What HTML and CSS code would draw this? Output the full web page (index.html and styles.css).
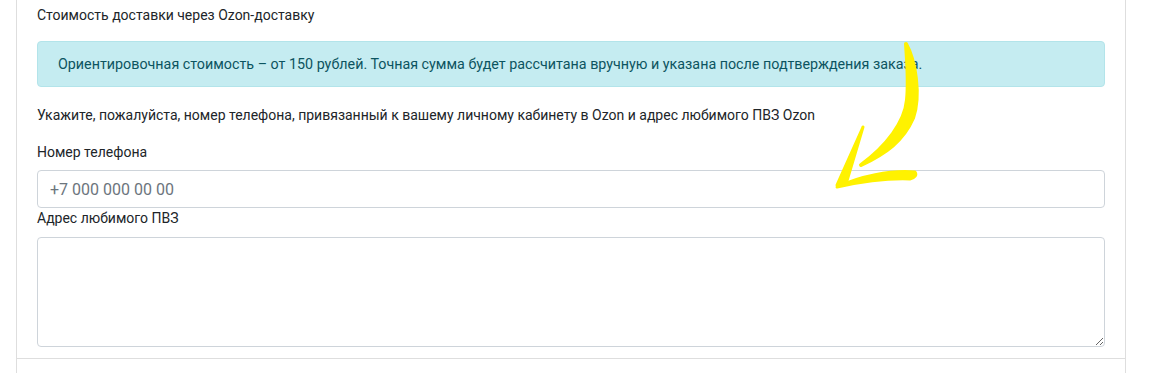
FILE: index.html
```html
<!doctype html>
<html lang="ru">
<head>
	<meta charset="utf-8" />
	<title>Доставка</title>
	<link rel="stylesheet" href="styles.css">
</head>
<body>
	<div class="page">
		<div class="card">
			<div class="card-body">
				<p class="title">Стоимость доставки через Ozon-доставку</p>
				<div class="alert">Ориентировочная стоимость – от 150 рублей. Точная сумма будет рассчитана вручную и указана после подтверждения заказа.</div>
				<p class="hint">Укажите, пожалуйста, номер телефона, привязанный к вашему личному кабинету в Ozon и адрес любимого ПВЗ Ozon</p>
				<label class="label" for="phone">Номер телефона</label>
				<input class="field" id="phone" type="text" placeholder="+7 000 000 00 00">
				<label class="label label-area" for="addr">Адрес любимого ПВЗ</label>
				<textarea class="field area" id="addr"></textarea>
			</div>
			<div class="card-footer"></div>
		</div>
	</div>

	<!-- жёлтая стрелка поверх формы -->
	<svg class="arrow" width="1151" height="373" viewBox="0 0 1151 373">
		<path d="M906,44 C915,60 921,95 913,118 C903,141 886,153 861,165 C887,146 905,122 907,100 C909,80 907,60 906,44 Z" fill="#fff200" stroke="#fff200" stroke-width="4" stroke-linejoin="round"/>
		<path d="M863,127 L837,185 L846,184 Z" fill="#fff200" stroke="#fff200" stroke-width="3" stroke-linejoin="round"/>
		<path d="M837,187 C860,176 890,170 915,172 C917,175 915,178 910,179 C885,178 860,182 837,187 Z" fill="#fff200" stroke="#fff200" stroke-width="3" stroke-linejoin="round"/>
	</svg>
</body>
</html>
```

FILE: styles.css
```css
body {
	margin: 0;
	font-family: Roboto, "Liberation Sans", Arial, sans-serif;
	color: #212529;
	background: #fff;
}

.page {
	padding: 0 25px 0 16px;
}

.card {
	border: 1px solid #dedede;
	border-top: 0;
	height: 380px;
}

.card-body {
	padding: 5px 20px 11px 20px;
	border-bottom: 1px solid #dedede;
}

.title {
	margin: 0;
	font-size: 14px;
	line-height: 20px;
}

.alert {
	margin-top: 16px;
	padding: 11px 20px;
	background: #c5ecf1;
	border: 1px solid #b3e4ea;
	border-radius: 4px;
	color: #0c5460;
	font-size: 14.3px;
	line-height: 22px;
}

.hint {
	margin: 18px 0 0;
	font-size: 14px;
	line-height: 20px;
}

.label {
	display: block;
	margin-top: 17px;
	margin-bottom: 8px;
	font-size: 14px;
	line-height: 20px;
}

.label-area {
	margin-top: 0;
	margin-bottom: 9px;
}

.field {
	display: block;
	box-sizing: border-box;
	width: 100%;
	height: 38px;
	margin: 0;
	padding: 6px 12px;
	border: 1px solid #ced4da;
	border-radius: 4px;
	font-family: Roboto, "Liberation Sans", Arial, sans-serif;
	font-size: 16px;
	color: #495057;
	background: #fff;
}

.field::placeholder {
	color: #6c757d;
}

.area {
	height: 110px;
	resize: vertical;
}

.arrow {
	position: absolute;
	left: 0;
	top: 0;
	pointer-events: none;
}
```
